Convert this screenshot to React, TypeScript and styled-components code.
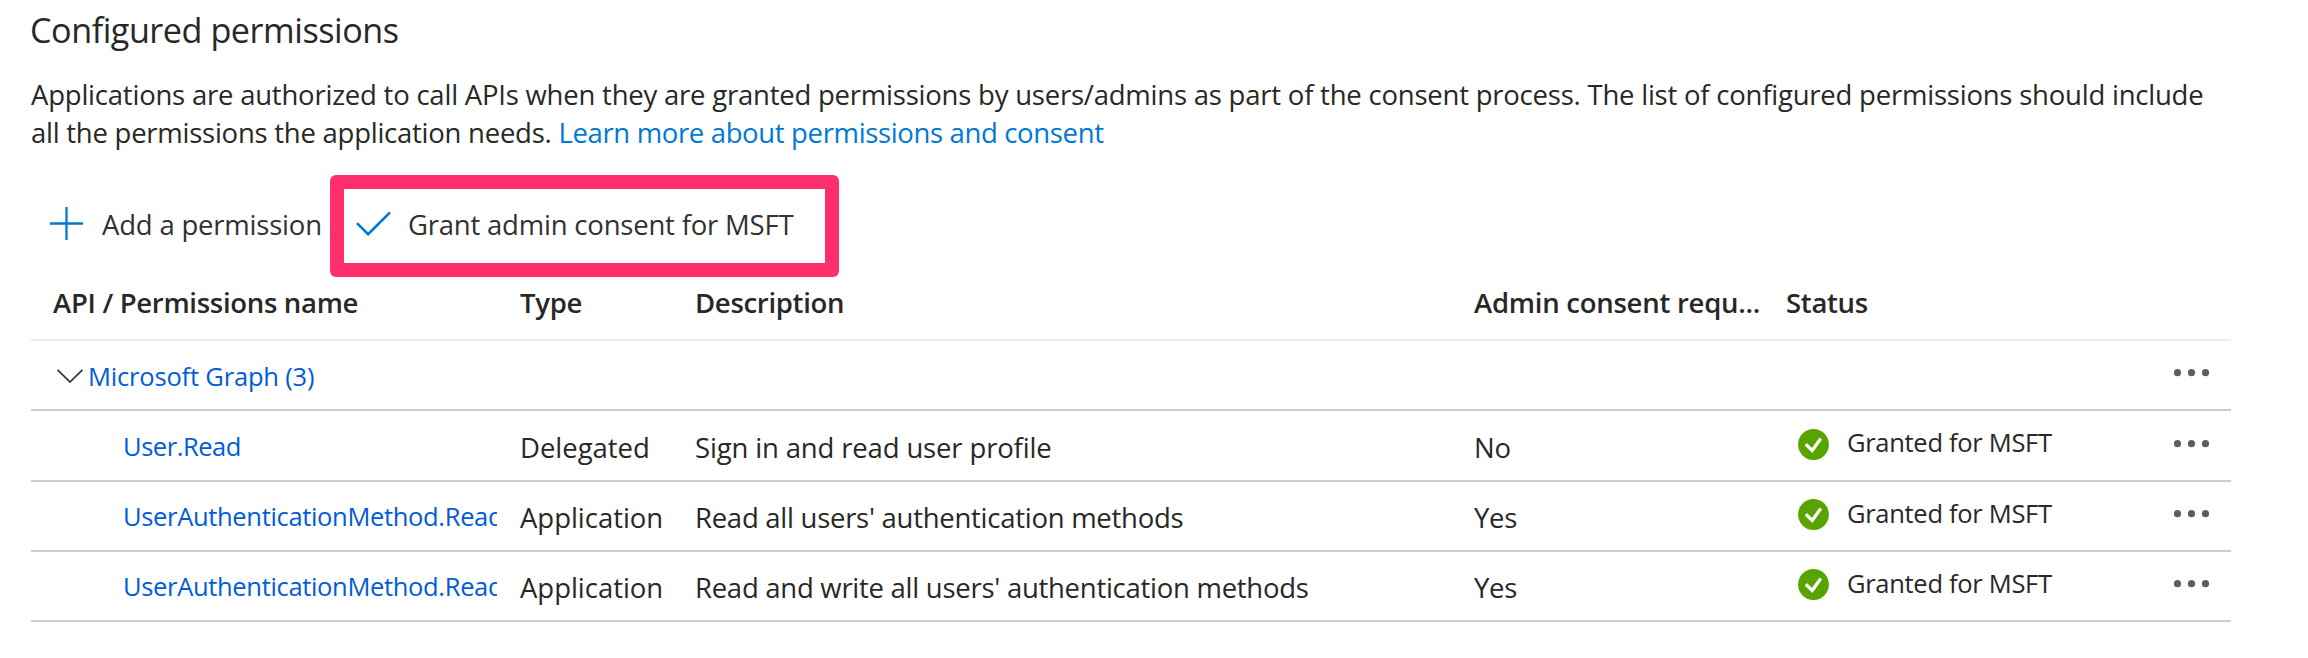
import React from 'react';
import styled, { createGlobalStyle } from 'styled-components';

const GlobalStyle = createGlobalStyle`
  * { box-sizing: border-box; }
  body {
    margin: 0;
    background: #fff;
    color: #292827;
    font-family: "Segoe UI", "Open Sans", "Noto Sans", sans-serif;
    font-size: 27.5px;
    line-height: 38px;
    letter-spacing: -0.25px;
    white-space: nowrap;
  }
`;

const Page = styled.main`
  width: 2308px;
  height: 658px;
  padding: 6px 77px 0 31px;
  overflow: hidden;
`;

const Title = styled.h1`
  margin: 0 0 22px -1px;
  font-size: 34.2px;
  font-weight: 400;
  line-height: 48px;
  letter-spacing: -0.48px;
`;

const Intro = styled.p`
  margin: 0;
  letter-spacing: -0.22px;
`;

const LastLine = styled.span`
  letter-spacing: -0.25px;
`;

const DocLink = styled.a`
  color: #0078d4;
  letter-spacing: -0.35px;
`;

const Toolbar = styled.div`
  display: flex;
  align-items: center;
  height: 71px;
  margin-top: 37px;
  padding-left: 19px;
  color: #323130;
`;

const Command = styled.button<{ $gap: number; $spacing: number }>`
  position: relative;
  display: flex;
  align-items: center;
  gap: ${(p) => p.$gap}px;
  margin: 0 34px 0 0;
  padding: 0;
  border: 0;
  background: none;
  color: inherit;
  font: inherit;
  letter-spacing: ${(p) => p.$spacing}px;

  svg { margin-bottom: 3px; }
`;

const Highlight = styled.span`
  position: absolute;
  left: -26px;
  top: -31px;
  width: 509px;
  height: 102px;
  border-radius: 6px;
  background: linear-gradient(#ff2f6d, #ff2f6d) top / 100% 14px no-repeat,
    linear-gradient(#ff2f6d, #ff2f6d) bottom / 100% 14px no-repeat,
    linear-gradient(#ff2f6d, #ff2f6d) left / 14px 100% no-repeat,
    linear-gradient(#ff2f6d, #ff2f6d) right / 14px 100% no-repeat;
  pointer-events: none;
`;

const Grid = styled.div`
  width: 2200px;
`;

const columns = '489px 175px 779px 312px 387px 58px';

const HeaderRow = styled.div`
  display: grid;
  grid-template-columns: ${columns};
  height: 81px;
  padding-top: 24px;
  border-bottom: 2px solid #ebebeb;
  font-weight: 600;
`;

const HeaderCell = styled.div<{ $indent?: number; $spacing?: number }>`
  padding-left: ${(p) => p.$indent ?? 0}px;
  letter-spacing: ${(p) => p.$spacing ?? -0.3}px;
`;

const Row = styled.div<{ $lead?: number }>`
  display: grid;
  grid-template-columns: ${columns};
  align-items: start;
  height: ${(p) => 70 + (p.$lead ?? 0)}px;
  padding-top: ${(p) => p.$lead ?? 0}px;
  border-bottom: 2px solid #ccc;
`;

const Cell = styled.div<{ $spacing?: number }>`
  padding-top: 17px;
  letter-spacing: ${(p) => p.$spacing ?? -0.25}px;
`;

const GroupCell = styled.div`
  display: flex;
  align-items: center;
  grid-column: span 5;
  gap: 5px;
  padding: 16px 0 0 26px;
  color: #015cda;
  font-size: 25.5px;
  letter-spacing: -0.18px;
`;

const NameCell = styled.div<{ $spacing: number }>`
  width: 466px;
  padding: 15px 0 0 92px;
  overflow: hidden;
  color: #015cda;
  font-size: 25.5px;
  letter-spacing: ${(p) => p.$spacing}px;
`;

const StatusCell = styled.div<{ $lift: number }>`
  display: flex;
  align-items: flex-start;
  gap: 18px;
  padding: ${(p) => 12 - p.$lift}px 0 0 12px;
  font-size: 25.5px;
  letter-spacing: -0.3px;

  svg { margin-top: ${(p) => 5 + p.$lift}px; }
`;

const MenuCell = styled.div`
  display: flex;
  padding-top: 27px;
`;

const PlusIcon = () => (
  <svg width="33" height="33" viewBox="0 0 33 33" fill="none" stroke="#0078d4" strokeWidth="2.3">
    <path d="M16.5 0V33M0 16.5H33" />
  </svg>
);

const CheckIcon = () => (
  <svg width="35" height="26" viewBox="0 0 35 26" fill="none" stroke="#0078d4" strokeWidth="2.6">
    <path d="M1 13.2L12.1 24.2L34 2.3" />
  </svg>
);

const ChevronIcon = () => (
  <svg width="26" height="14" viewBox="0 0 26 14" fill="none" stroke="#323130" strokeWidth="1.7">
    <path d="M0.6 0.8L13 13L25.4 0.8" />
  </svg>
);

const GrantedIcon = () => (
  <svg width="31" height="31" viewBox="0 0 31 31">
    <circle cx="15.5" cy="15.5" r="15.4" fill="#57a300" />
    <path d="M7.8 15.3L14.2 21.4L22.8 9.5" fill="none" stroke="#fff" strokeWidth="3.3" />
  </svg>
);

const More = () => (
  <MenuCell>
    <svg width="37" height="10" viewBox="0 0 37 10" fill="#605e5c">
      <circle cx="4.5" cy="4.7" r="3.6" />
      <circle cx="18.5" cy="4.7" r="3.6" />
      <circle cx="32.5" cy="4.7" r="3.6" />
    </svg>
  </MenuCell>
);

const permissions = [
  { id: 1, name: 'User.Read', type: 'Delegated', description: 'Sign in and read user profile', consent: 'No' },
  { id: 2, name: 'UserAuthenticationMethod.Read', type: 'Application', description: "Read all users' authentication methods", consent: 'Yes' },
  { id: 3, name: 'UserAuthenticationMethod.Read', type: 'Application', description: "Read and write all users' authentication methods", consent: 'Yes' },
];

export default function App() {
  return (
    <>
      <GlobalStyle />
      <Page>
        <Title>Configured permissions</Title>
        <Intro>
          Applications are authorized to call APIs when they are granted permissions by users/admins as part of the
          consent process. The list of configured permissions should include
          <br />
          <LastLine>all the permissions the application needs. </LastLine>
          <DocLink>Learn more about permissions and consent</DocLink>
        </Intro>
        <Toolbar>
          <Command $gap={19} $spacing={-0.2}>
            <PlusIcon />
            Add a permission
          </Command>
          <Command $gap={17} $spacing={-0.2}>
            <CheckIcon />
            Grant admin consent for MSFT
            <Highlight />
          </Command>
        </Toolbar>
        <Grid>
          <HeaderRow>
            <HeaderCell $indent={22}>API / Permissions name</HeaderCell>
            <HeaderCell>Type</HeaderCell>
            <HeaderCell>Description</HeaderCell>
            <HeaderCell $spacing={-0.25}>Admin consent requ...</HeaderCell>
            <HeaderCell>Status</HeaderCell>
          </HeaderRow>
          <Row>
            <GroupCell>
              <ChevronIcon />
              Microsoft Graph (3)
            </GroupCell>
            <More />
          </Row>
          {permissions.map((p, i) => (
            <Row key={p.id} $lead={i === 0 ? 1 : 0}>
              <NameCell $spacing={i === 0 ? -0.45 : -0.33}>{p.name}</NameCell>
              <Cell $spacing={-0.03}>{p.type}</Cell>
              <Cell $spacing={i === 0 ? -0.15 : -0.27}>{p.description}</Cell>
              <Cell>{p.consent}</Cell>
              <StatusCell $lift={i === 0 ? 1 : 0}>
                <GrantedIcon />
                Granted for MSFT
              </StatusCell>
              <More />
            </Row>
          ))}
        </Grid>
      </Page>
    </>
  );
}
